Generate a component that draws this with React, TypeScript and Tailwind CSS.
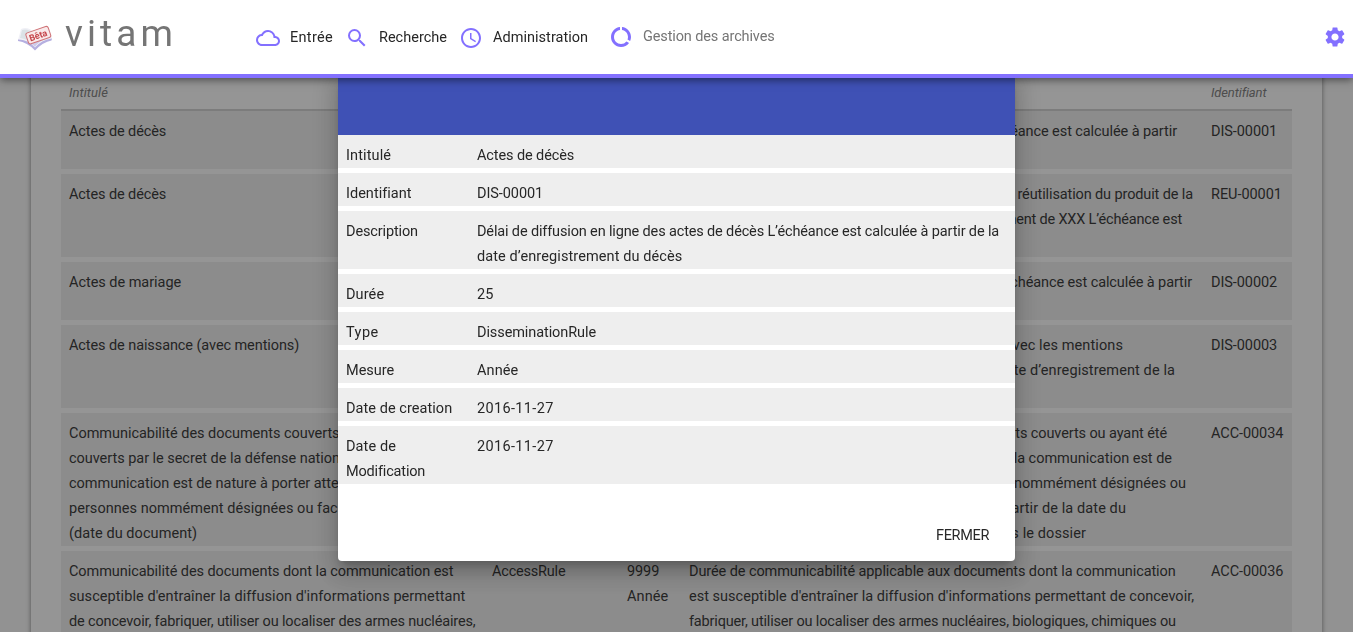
import React from 'react';
import { MdCloudQueue, MdSearch, MdAccessTime, MdDataUsage, MdSettings } from 'react-icons/md';

type Line = { text: string; track: string; width?: number };
type Rule = { title: Line[]; type?: Line; duration?: Line[]; description: Line[]; id: Line; height: string };

const rules: Rule[] = [
  {
    title: [{ text: 'Actes de décès', track: 'tracking-[-0.1px]' }],
    description: [{ text: 'échéance est calculée à partir', track: 'tracking-[-0.08px]', width: 488 }],
    id: { text: 'DIS-00001', track: 'tracking-[-0.08px]' },
    height: 'h-[63px]',
  },
  {
    title: [{ text: 'Actes de décès', track: 'tracking-[-0.1px]' }],
    description: [
      { text: 'réutilisation du produit de la', track: 'tracking-[-0.12px]', width: 504 },
      { text: 'document de XXX L’échéance est', track: 'tracking-[-0.18px]', width: 493 },
    ],
    id: { text: 'REU-00001', track: 'tracking-[-0.05px]' },
    height: 'h-[88px]',
  },
  {
    title: [{ text: 'Actes de mariage', track: 'tracking-[-0.04px]' }],
    description: [{ text: 'échéance est calculée à partir', track: 'tracking-[-0.1px]', width: 503 }],
    id: { text: 'DIS-00002', track: 'tracking-[-0.08px]' },
    height: 'h-[63px]',
  },
  {
    title: [{ text: 'Actes de naissance (avec mentions)', track: 'tracking-[-0.09px]' }],
    description: [
      { text: 'avec les mentions', track: 'tracking-[0.1px]', width: 434 },
      { text: 'date d’enregistrement de la', track: 'tracking-[0.1px]', width: 486 },
    ],
    id: { text: 'DIS-00003', track: 'tracking-[-0.08px]' },
    height: 'h-[88px]',
  },
  {
    title: [
      { text: 'Communicabilité des documents couverts', track: 'tracking-[-0.04px]' },
      { text: 'couverts par le secret de la défense nationale', track: 'tracking-[-0.04px]' },
      { text: 'communication est de nature à porter atteinte', track: 'tracking-[-0.04px]' },
      { text: 'personnes nommément désignées ou facilement', track: 'tracking-[0.04px]' },
      { text: '(date du document)', track: 'tracking-[0.06px]' },
    ],
    description: [
      { text: 'documents couverts ou ayant été', track: 'tracking-[-0.1px]', width: 478 },
      { text: 'la communication est de', track: 'tracking-[-0.02px]', width: 483 },
      { text: 'nommément désignées ou', track: 'tracking-[0px]', width: 497 },
      { text: 'partir de la date du', track: 'tracking-[0.1px]', width: 437 },
      { text: 'dans le dossier', track: 'tracking-[0.1px]', width: 397 },
    ],
    id: { text: 'ACC-00034', track: 'tracking-[-0.08px]' },
    height: 'h-[138px]',
  },
  {
    title: [
      { text: 'Communicabilité des documents dont la communication est', track: 'tracking-[-0.07px]' },
      { text: "susceptible d'entraîner la diffusion d'informations permettant", track: 'tracking-[0.065px]' },
      { text: 'de concevoir, fabriquer, utiliser ou localiser des armes nucléaires,', track: 'tracking-[-0.15px]' },
    ],
    type: { text: 'AccessRule', track: 'tracking-[-0.2px]' },
    duration: [
      { text: '9999', track: 'tracking-[-0.1px]' },
      { text: 'Année', track: 'tracking-[0.1px]' },
    ],
    description: [
      { text: 'Durée de communicabilité applicable aux documents dont la communication', track: 'tracking-[-0.09px]' },
      { text: "est susceptible d'entraîner la diffusion d'informations permettant de concevoir,", track: 'tracking-[0.02px]' },
      { text: 'fabriquer, utiliser ou localiser des armes nucléaires, biologiques, chimiques ou', track: 'tracking-[-0.17px]' },
    ],
    id: { text: 'ACC-00036', track: 'tracking-[-0.08px]' },
    height: 'h-[138px]',
  },
];

const details: { label: Line[]; value: Line[] }[] = [
  {
    label: [{ text: 'Intitulé', track: 'tracking-[0.12px]' }],
    value: [{ text: 'Actes de décès', track: 'tracking-[-0.1px]' }],
  },
  {
    label: [{ text: 'Identifiant', track: 'tracking-[0.02px]' }],
    value: [{ text: 'DIS-00001', track: 'tracking-[-0.08px]' }],
  },
  {
    label: [{ text: 'Description', track: 'tracking-[-0.13px]' }],
    value: [
      {
        text: 'Délai de diffusion en ligne des actes de décès L’échéance est calculée à partir de la',
        track: 'tracking-[-0.145px]',
      },
      { text: 'date d’enregistrement du décès', track: 'tracking-[0.1px]' },
    ],
  },
  {
    label: [{ text: 'Durée', track: 'tracking-[0.1px]' }],
    value: [{ text: '25', track: 'tracking-[0.1px]' }],
  },
  {
    label: [{ text: 'Type', track: 'tracking-[0.45px]' }],
    value: [{ text: 'DisseminationRule', track: 'tracking-[-0.09px]' }],
  },
  {
    label: [{ text: 'Mesure', track: 'tracking-[0px]' }],
    value: [{ text: 'Année', track: 'tracking-[0.1px]' }],
  },
  {
    label: [{ text: 'Date de creation', track: 'tracking-[0.05px]' }],
    value: [{ text: '2016-11-27', track: 'tracking-[0.35px]' }],
  },
  {
    label: [
      { text: 'Date de', track: 'tracking-[0.1px]' },
      { text: 'Modification', track: 'tracking-[-0.17px]' },
    ],
    value: [{ text: '2016-11-27', track: 'tracking-[0.35px]' }],
  },
];

function Lines({ lines }: { lines: Line[] }) {
  return (
    <div className="pl-2 whitespace-nowrap">
      {lines.map(({ text, track, width }) => (
        <div key={text} className={`${track} ${width ? 'flex justify-end' : ''}`} style={{ width }}>
          {text}
        </div>
      ))}
    </div>
  );
}

function Logo() {
  return (
    <svg className="mt-[25px] ml-[17px] h-[28px] w-[36px] shrink-0" viewBox="0 0 36 28">
      <path d="M1 15 L4 4 Q11 1 18 8 Q25 0 32 3 L35 14 Q25 15 18 24 Q11 16 1 15Z" fill="#f0f0f6" />
      <path d="M1 14.5 Q11 14.5 18 22.5 Q25 14.5 35 13.5 L34.5 15.5 Q26 17 18 25.5 Q10 17 1 16Z" fill="#b5afe0" />
      <path d="M5 5 Q12 3 17 10 L17 20 Q11 14 3 13Z" fill="#dbe2e6" />
      <path d="M10 17 Q15 18 18 22 Q21 17 27 14.5 L18 17Z" fill="#cfcbea" />
      <g transform="rotate(-19 21 10)">
        <rect x="9.5" y="4.5" width="23.5" height="11.5" rx="2" fill="#f9e9ea" stroke="#cf7377" strokeWidth="1" />
        <text x="21" y="13.6" textAnchor="middle" fontSize="9" letterSpacing="0" fontWeight="700" fill="#c5444a" fontFamily="Roboto, sans-serif">
          Bêta
        </text>
      </g>
    </svg>
  );
}

function Header() {
  return (
    <header className="fixed inset-x-0 top-0 z-30 flex h-[78px] border-b-4 border-[#8370ff] bg-white shadow-[0_2px_8px_rgba(0,0,0,0.5)]">
      <Logo />
      <div className="mt-[10px] ml-[12px] w-[191px] text-[37px] leading-[48px] tracking-[4.1px] text-[#757575]">vitam</div>
      <nav className="flex h-[74px] items-center whitespace-nowrap">
        <MdCloudQueue className="mt-[2px] size-6 text-[#8370ff]" />
        <span className="ml-[10px] w-[55px] tracking-[0.3px]">Entrée</span>
        <MdSearch className="mt-[2px] size-6 text-[#8370ff]" />
        <span className="ml-[10px] w-[80px] tracking-[0px]">Recherche</span>
        <MdAccessTime className="mt-[2px] size-6 text-[#8370ff]" />
        <span className="ml-[10px] w-[116px] tracking-[0.03px]">Administration</span>
        <MdDataUsage className="size-6 text-[#8370ff]" />
        <span className="mt-[-2px] ml-[10px] tracking-[-0.12px] text-[#757575]">Gestion des archives</span>
      </nav>
      <MdSettings className="mt-[25px] mr-[6px] ml-auto size-6 text-[#8370ff]" />
    </header>
  );
}

const columns = 'grid grid-cols-[423px_135px_62px_522px_89px]';

function RulesTable() {
  return (
    <main className="mx-[31px] h-[700px] w-[1291px] bg-white px-[30px] pt-[78px] shadow-[0_1px_5px_rgba(0,0,0,0.5)]">
      <div className={`${columns} h-[33px] border-b-2 border-[#d0d0d0] text-[13px] leading-[29px] text-[#757575] italic`}>
        <span className="pl-2 tracking-[0.06px]">Intitulé</span>
        <span className="col-start-5 pl-2 tracking-[-0.12px]">Identifiant</span>
      </div>
      {rules.map((rule) => (
        <div key={rule.id.text} className={`${columns} ${rule.height} border-b-5 border-white bg-[#eeeeee] pt-2`}>
          <Lines lines={rule.title} />
          <Lines lines={rule.type ? [rule.type] : []} />
          <Lines lines={rule.duration ?? []} />
          <Lines lines={rule.description} />
          <Lines lines={[rule.id]} />
        </div>
      ))}
    </main>
  );
}

function DetailDialog() {
  return (
    <div className="fixed inset-0 z-20 flex items-center justify-center bg-[rgba(33,33,33,0.48)]">
      <section className="flex h-[490px] w-[677px] flex-col overflow-hidden rounded bg-white shadow-[0_7px_8px_-4px_rgba(0,0,0,0.2),0_13px_19px_2px_rgba(0,0,0,0.14),0_5px_24px_4px_rgba(0,0,0,0.12)]">
        <div className="h-16 shrink-0 bg-[#3f51b5]" />
        {details.map(({ label, value }) => (
          <div key={label[0].text + label.length} className="grid grid-cols-[131px_546px] border-b-5 border-white bg-[#eeeeee] pt-2">
            <Lines lines={label} />
            <Lines lines={value} />
          </div>
        ))}
        <div className="mt-auto flex h-[52px] items-center justify-end pr-[26px]">
          <button className="tracking-[-0.35px]">FERMER</button>
        </div>
      </section>
    </div>
  );
}

export default function App() {
  return (
    <div className="h-[632px] overflow-hidden bg-[#fafafa] font-['Roboto',sans-serif] text-[14.5px] leading-[25px] text-[#272727]">
      <Header />
      <RulesTable />
      <DetailDialog />
    </div>
  );
}
